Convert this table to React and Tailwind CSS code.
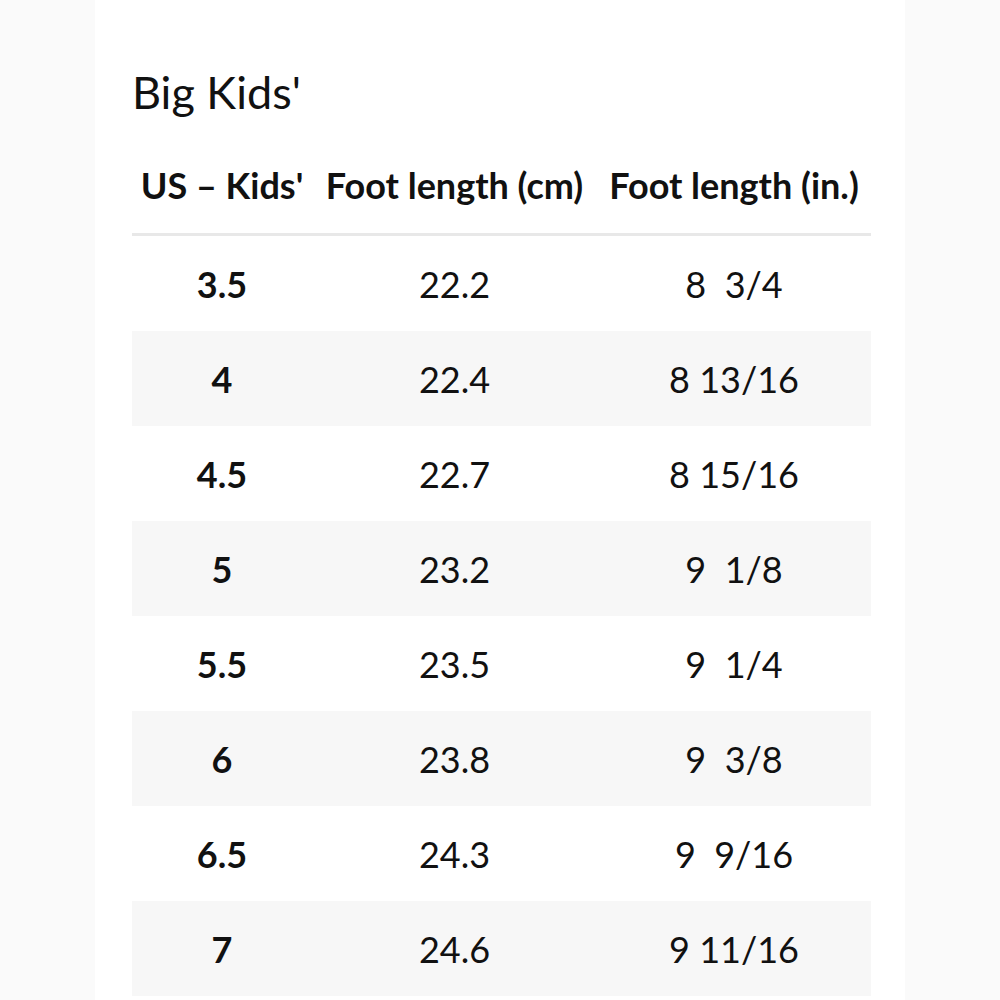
import React from 'react';

const rows = [
  { us: '3.5', cm: '22.2', inch: '8  3/4' },
  { us: '4', cm: '22.4', inch: '8 13/16' },
  { us: '4.5', cm: '22.7', inch: '8 15/16' },
  { us: '5', cm: '23.2', inch: '9  1/8' },
  { us: '5.5', cm: '23.5', inch: '9  1/4' },
  { us: '6', cm: '23.8', inch: '9  3/8' },
  { us: '6.5', cm: '24.3', inch: '9  9/16' },
  { us: '7', cm: '24.6', inch: '9 11/16' },
];

const App = () => {
  return (
    <div className="w-[1000px] h-[1000px] overflow-hidden bg-[#fafafa] flex justify-center font-['Lato',sans-serif] text-[#111]">
      <div className="w-[810px] h-full bg-white pl-[37px] pt-[62px]">
        {/* Title */}
        <h1 className="text-[45px] leading-[60px] font-normal">Big Kids'</h1>

        <div className="w-[739px] mt-[24px]">
          {/* Header */}
          <div className="grid grid-cols-[180px_285px_274px] h-[90px] pt-[17px] border-b-[3px] border-[#e8e8e8] text-[36px] leading-[44px] font-bold">
            <div className="text-center">US – Kids'</div>
            <div className="text-center">Foot length (cm)</div>
            <div className="text-center">Foot length (in.)</div>
          </div>

          {/* Rows */}
          {rows.map((row, i) => (
            <div
              key={row.us}
              className={`grid grid-cols-[180px_285px_274px] h-[95px] items-center text-[36px] ${
                i % 2 === 1 ? 'bg-[#f7f7f7]' : 'bg-white'
              }`}
            >
              <div className="text-center font-bold">{row.us}</div>
              <div className="text-center">{row.cm}</div>
              <div className="text-center whitespace-pre">{row.inch}</div>
            </div>
          ))}
        </div>
      </div>
    </div>
  );
};

export default App;
